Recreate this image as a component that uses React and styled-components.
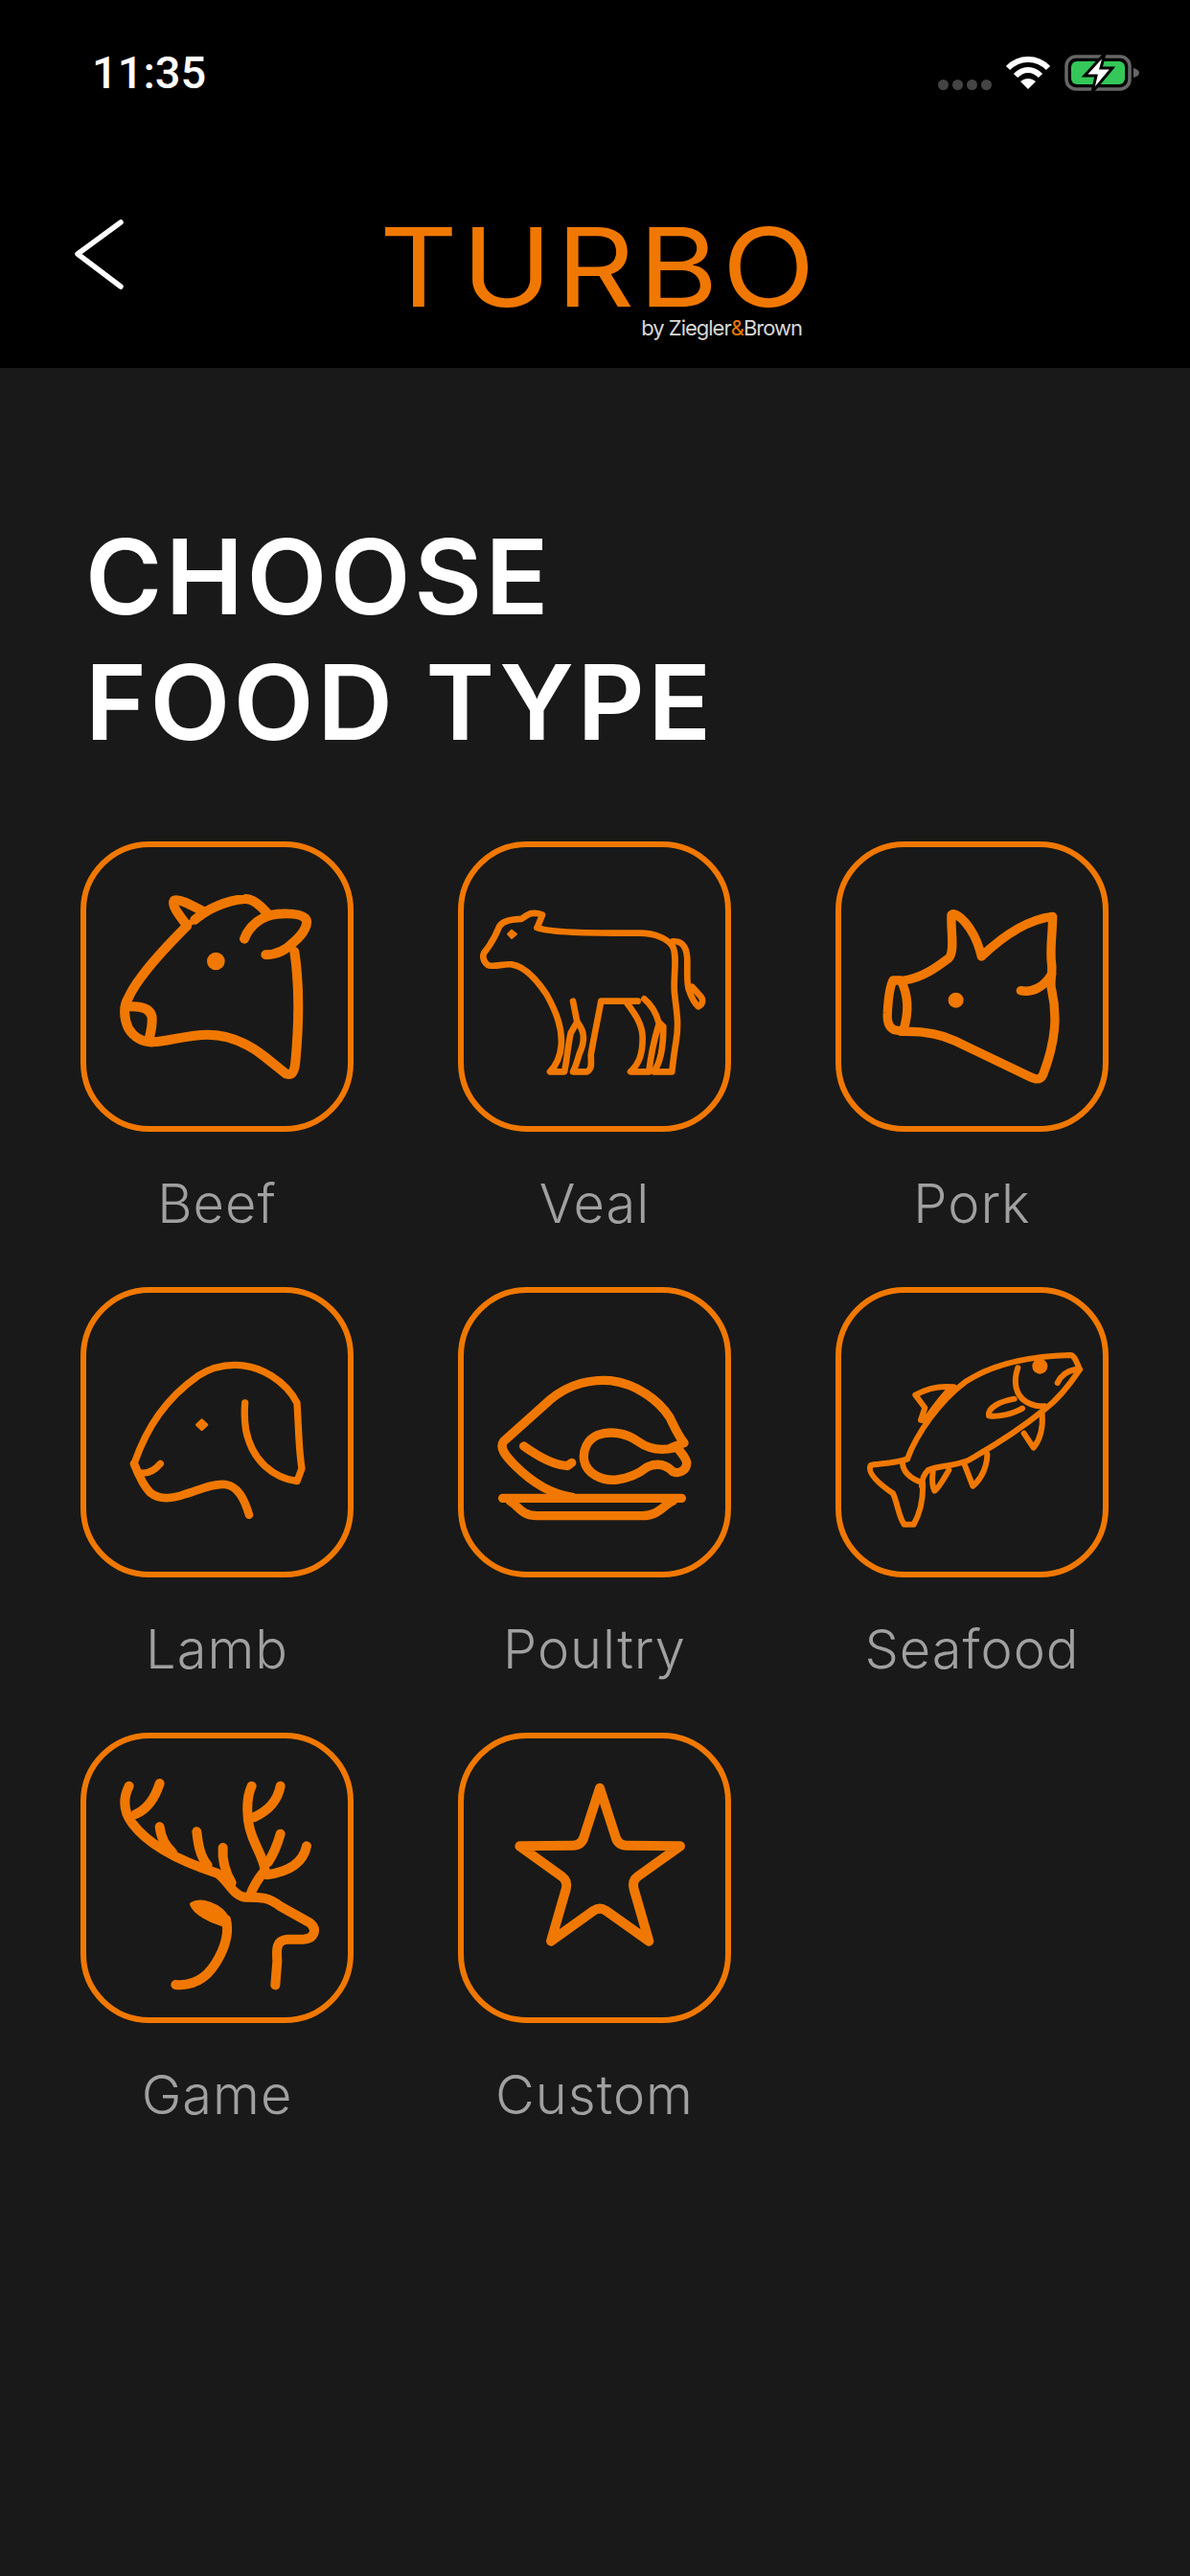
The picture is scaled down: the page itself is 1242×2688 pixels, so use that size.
import styled, { createGlobalStyle } from 'styled-components'

const ORANGE = '#f07800'

const Global = createGlobalStyle`
  html, body { margin: 0; padding: 0; background: #191919; }
  #root { width: 1242px; height: 2688px; }
`

const Page = styled.div`
  width: 1242px;
  height: 2688px;
  background: #191919;
  font-family: Inter, "Liberation Sans", sans-serif;
  overflow: hidden;
`

const Top = styled.header`
  height: 384px;
  background: #000;
  box-sizing: border-box;
  padding-top: 48px;
`

const StatusBar = styled.div`
  height: 56px;
  display: flex;
  align-items: center;
  justify-content: space-between;
  padding: 0 51px 0 96px;
`

const Time = styled.span`
  font-family: Roboto, sans-serif;
  font-weight: 500;
  font-size: 47px;
  line-height: 56px;
  color: #fff;
`

const StatusIcons = styled.div`
  display: flex;
  align-items: center;
  gap: 14px;
`

const Dots = styled.div`
  display: flex;
  gap: 4px;
  margin-top: 24px;
`

const Dot = styled.i`
  width: 11px;
  height: 11px;
  border-radius: 50%;
  background: #444;
`

const NavBar = styled.div`
  position: relative;
  margin-top: 123px;
  height: 118px;
`

const Back = styled.svg`
  position: absolute;
  left: 76px;
  top: 0;
`

const Logo = styled.div`
  width: 442px;
  margin-left: 400px;
  padding-top: 8px;
  display: flex;
  flex-direction: column;
  align-items: flex-end;
`

const LogoWord = styled.div`
  align-self: flex-start;
  color: ${ORANGE};
  font-size: 114px;
  line-height: 88px;
  font-weight: 400;
  letter-spacing: 4px;
  margin-left: -4px;
  transform: scaleX(1.11);
  transform-origin: left center;
  white-space: nowrap;
`

const LogoBy = styled.div`
  color: #d8d8d8;
  font-size: 22px;
  line-height: 28px;
  margin-top: 5px;
  margin-right: 5px;
  letter-spacing: -1px;
  span { color: ${ORANGE}; }
`

const Heading = styled.h1`
  margin: 152px 0 0 89px;
  color: #fff;
  font-size: 109px;
  line-height: 131px;
  font-weight: 600;
  letter-spacing: 3.5px;
`

const Grid = styled.div`
  display: grid;
  grid-template-columns: repeat(3, 285px);
  column-gap: 109px;
  row-gap: 70px;
  margin: 80px 0 0 84px;
`

const Item = styled.div`
  display: flex;
  flex-direction: column;
  align-items: center;
`

const Tile = styled.div`
  width: 285px;
  height: 303px;
  box-sizing: border-box;
  border: 6px solid ${ORANGE};
  border-radius: 72px;
  display: flex;
`

const Label = styled.div`
  margin-top: 58px;
  height: 34px;
  line-height: 34px;
  font-size: 56px;
  font-weight: 300;
  letter-spacing: 1px;
  color: #a0a0a0;
  white-space: nowrap;
`

// all icons traced in crop coords, viewBox is the inside of the tile
const Icon = ({ box, sw, children }) => (
  <svg
    width="273"
    height="291"
    viewBox={box}
    fill="none"
    stroke={ORANGE}
    strokeWidth={sw}
    strokeLinecap="round"
    strokeLinejoin="round"
  >
    {children}
  </svg>
)

const Beef = () => (
  <Icon box="90 73 819 873" sw={30}>
    <path d="M405 320C340 385 250 480 222 545C205 570 208 610 222 640C240 670 270 685 300 683C350 680 410 660 470 660C540 660 600 690 650 730L715 782C735 790 742 775 745 745C755 640 760 520 742 400" />
    <path d="M405 318C385 290 355 255 365 240C380 232 420 255 462 277" />
    <path d="M400 318L450 292" strokeWidth={18} />
    <path d="M430 300C470 265 530 240 585 235C610 232 635 255 655 278" />
    <path d="M585 360C600 320 640 285 690 282C720 280 760 280 775 295C790 310 770 345 740 370C715 395 685 410 652 410" />
    <path d="M225 572C260 570 290 575 296 605C298 635 290 660 285 680" />
    <circle cx="496" cy="430" r="28" fill={ORANGE} stroke="none" />
  </Icon>
)

const Veal = () => (
  <Icon box="70 73 819 873" sw={20}>
    <path d="M300 325L316 285C300 278 280 278 270 285L250 298C225 300 195 300 182 320C172 345 160 370 140 395C125 410 130 430 145 442C165 450 190 438 220 440C260 445 300 490 330 535C360 590 380 640 375 695C372 730 360 755 340 776L385 776C392 750 395 700 405 655L425 620L412 555" />
    <path d="M300 325C340 340 450 342 620 342C670 342 710 360 725 385C740 420 725 480 730 530C735 580 745 620 735 680C728 720 725 750 722 776L665 776C685 750 695 700 695 635L680 620C670 585 655 565 635 548" />
    <path d="M725 368C760 365 770 395 770 430C770 470 768 505 775 520C780 535 790 560 805 572C820 565 820 550 812 540L785 510" />
    <path d="M425 620C450 650 450 680 432 720C425 745 418 765 412 776L455 776C470 770 470 755 468 725C475 680 490 610 500 555L615 555" />
    <path d="M580 560C610 600 630 630 630 670C630 720 620 750 592 776L650 776C655 730 665 680 680 630" />
    <path d="M208 345L220 333L235 345L220 358Z" fill={ORANGE} strokeWidth={6} />
  </Icon>
)

const Pork = () => (
  <Icon box="83 73 819 873" sw={28}>
    <path d="M280 490C340 480 380 450 420 420C440 400 425 330 428 285C440 270 500 320 522 415C580 360 660 300 745 290C745 340 735 400 742 440C745 470 735 500 742 520C760 600 755 680 715 785C705 805 690 800 670 790L440 680C390 655 330 648 270 650" />
    <path d="M245 490L270 490C295 540 295 590 278 645C235 655 225 625 228 590C230 550 235 510 245 490Z" />
    <path d="M645 522C680 530 720 510 742 470" />
    <circle cx="442" cy="552" r="24" fill={ORANGE} stroke="none" />
  </Icon>
)

const Lamb = () => (
  <Icon box="90 60 819 873" sw={22}>
    <path d="M240 595C280 480 340 390 440 320C510 275 600 275 670 320C710 345 735 375 750 405C755 480 755 550 765 610L750 650C680 640 610 590 590 490C585 460 585 430 587 405" />
    <path d="M240 595C250 620 265 660 290 685C320 710 360 705 400 690C440 678 490 655 525 660C565 665 585 705 600 755" strokeWidth={26} />
    <path d="M250 622C280 630 305 615 322 595" />
    <path d="M436 473L452 458L468 473L452 488Z" fill={ORANGE} strokeWidth={8} />
  </Icon>
)

const Poultry = () => (
  <Icon box="70 60 819 873" sw={28}>
    <path d="M410 700C340 690 280 650 230 600C200 570 180 545 195 525L340 395C400 345 470 330 530 335C610 345 680 395 715 450C730 480 740 505 760 530L720 545" />
    <path d="M730 545C690 555 650 550 615 525C580 500 530 490 490 505C455 520 442 555 447 585C455 625 500 650 550 645C590 640 620 625 645 605C680 590 705 600 725 620C750 630 770 610 768 590C762 570 745 555 735 540" />
    <path d="M258 540C300 570 350 600 395 602L408 592" />
    <path d="M192 703H752" />
    <path d="M215 712C245 730 250 758 300 758H630C680 758 695 725 725 712" />
  </Icon>
)

const Seafood = () => (
  <Icon box="83 60 819 873" sw={18}>
    <path d="M830 300C790 360 760 395 720 425C640 490 560 540 480 585C430 605 390 600 355 615C340 630 335 650 335 665" />
    <path d="M290 580C320 500 390 400 470 340C560 280 680 258 800 255C815 255 820 280 830 300" />
    <path d="M290 580C250 595 190 595 175 600C165 620 190 650 245 688C260 720 262 760 280 785L310 785C330 750 340 700 338 655C310 645 275 625 275 590" />
    <path d="M435 355C390 350 350 360 315 380L345 420L332 458L345 460C370 425 395 390 420 365" />
    <path d="M636 295C620 340 630 380 660 400C685 415 700 415 720 415" />
    <path d="M625 392C580 400 540 420 545 445C570 450 620 440 650 422" />
    <path d="M760 342C770 320 790 305 815 300" />
    <path d="M712 440C715 480 705 520 685 545L655 500" />
    <path d="M540 565C540 600 525 640 495 665L470 600" />
    <path d="M420 615C400 650 385 675 375 680C365 660 368 635 370 618" />
    <circle cx="705" cy="290" r="24" fill={ORANGE} stroke="none" />
  </Icon>
)

const Game = () => (
  <Icon box="90 73 819 873" sw={30}>
    <path d="M224 222C205 260 205 300 235 340C280 400 360 450 500 495C530 510 550 570 590 570C640 570 660 570 700 600L790 650C815 670 805 700 770 702L720 702C685 705 685 730 688 770L682 845" />
    <path d="M320 214C305 260 280 295 245 310" />
    <path d="M320 350C325 390 340 410 360 430" />
    <path d="M436 365C440 400 445 440 470 470" />
    <path d="M518 415C515 450 525 490 545 525" />
    <path d="M608 222C590 260 590 330 610 380C625 420 645 450 650 485C630 510 615 530 605 560" />
    <path d="M698 222C690 265 660 300 615 320" />
    <path d="M698 372C690 400 680 430 660 460" />
    <path d="M780 410C770 460 730 490 655 500" />
    <path d="M370 844C440 850 480 810 510 750C530 710 535 670 528 640" />
    <path d="M420 592C445 575 510 590 535 640L515 655C480 645 430 620 420 592Z" fill={ORANGE} strokeWidth={12} />
  </Icon>
)

const Custom = () => (
  <Icon box="70 73 819 873" sw={30}>
    <path d="M496 228L545 380Q552 408 580 408L748 410L615 505Q595 520 603 545L650 708L515 612Q496 600 477 612L343 708L390 545Q397 520 377 505L245 410L412 408Q440 408 447 380Z" />
  </Icon>
)

const foods = [
  ['Beef', Beef],
  ['Veal', Veal],
  ['Pork', Pork],
  ['Lamb', Lamb],
  ['Poultry', Poultry],
  ['Seafood', Seafood],
  ['Game', Game],
  ['Custom', Custom],
]

function App() {
  return (
    <Page>
      <Global />
      <Top>
        <StatusBar>
          <Time>11:35</Time>
          <StatusIcons>
            <Dots>
              <Dot />
              <Dot />
              <Dot />
              <Dot />
            </Dots>
            <svg width="48" height="36" viewBox="0 0 48 36" fill="none" stroke="#fff" strokeWidth="6">
              <path d="M3 13C15 1 33 1 45 13" />
              <path d="M11 21C19 13 29 13 37 21" />
              <path d="M24 35L16 27C21 23 27 23 32 27Z" fill="#fff" stroke="none" />
            </svg>
            <svg width="80" height="40" viewBox="0 0 80 40" fill="none">
              <rect x="2" y="3" width="66" height="34" rx="10" stroke="#666" strokeWidth="3.5" />
              <rect x="7" y="8" width="56" height="24" rx="6" fill="#34c759" />
              <path d="M72 15C76 16 78 18 78 20C78 22 76 24 72 25Z" fill="#666" />
              <path d="M42 0L21 23H33L29 40L50 15H38Z" fill="#fff" stroke="#000" strokeWidth="3" />
            </svg>
          </StatusIcons>
        </StatusBar>
        <NavBar>
          <Back width="60" height="80" viewBox="0 0 60 80" fill="none" stroke="#fff" strokeWidth="5.5" strokeLinecap="round" strokeLinejoin="round">
            <path d="M50 5L5 38L50 72" />
          </Back>
          <Logo>
            <LogoWord>TURBO</LogoWord>
            <LogoBy>by Ziegler<span>&amp;</span>Brown</LogoBy>
          </Logo>
        </NavBar>
      </Top>
      <Heading>
        CHOOSE
        <br />
        FOOD TYPE
      </Heading>
      <Grid>
        {foods.map(([name, Drawing]) => (
          <Item key={name}>
            <Tile>
              <Drawing />
            </Tile>
            <Label>{name}</Label>
          </Item>
        ))}
      </Grid>
    </Page>
  )
}

export default App
